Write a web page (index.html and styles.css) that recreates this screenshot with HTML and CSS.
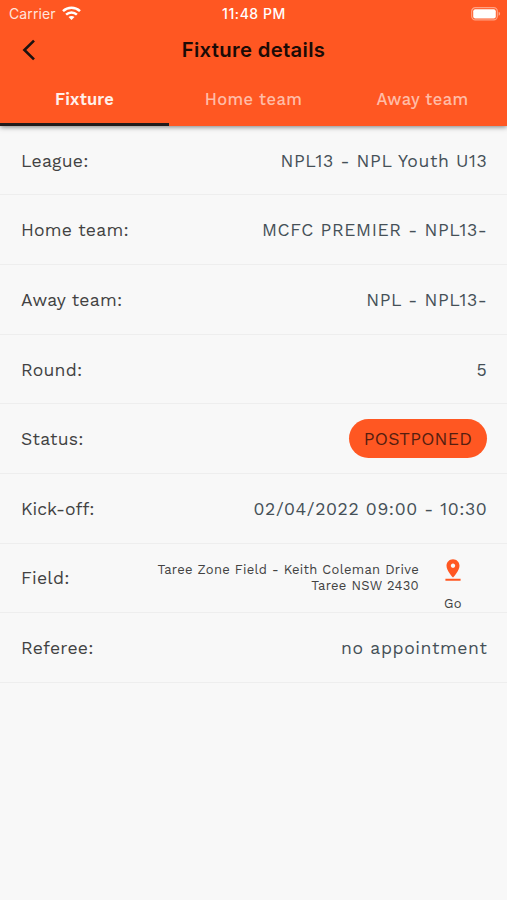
FILE: index.html
```html
<!DOCTYPE html>
<html lang="en">
<head>
<meta charset="utf-8">
<title>Fixture details</title>
<link rel="stylesheet" href="styles.css">
</head>
<body>
<header class="header">
  <div class="status-bar">
    <div class="carrier"><span>Carrier</span>
      <svg width="19" height="15" viewBox="0 0 19 15" fill="none" stroke="#fff" stroke-width="2.5"><path d="M1 5.2C5.8.7 13.2.7 18 5.2M4.1 8.7c3.1-2.9 7.7-2.9 10.8 0"/><path d="M9.5 14.1 6.5 11c1.7-1.5 4.3-1.5 6 0z" fill="#fff" stroke="none"/></svg>
    </div>
    <div class="clock">11:48 PM</div>
    <svg class="battery" width="30" height="14" viewBox="0 0 30 14"><rect x=".7" y=".7" width="25.6" height="12.2" rx="3.6" fill="none" stroke="#fff" stroke-opacity=".45" stroke-width="1.2"/><rect x="2.2" y="2.2" width="22.6" height="9.2" rx="2" fill="#fff"/><path d="M27.6 4.8c2 .7 2 3.3 0 4z" fill="#fff" fill-opacity=".5"/></svg>
  </div>
  <div class="title-bar">
    <svg class="back" width="14" height="22" viewBox="0 0 14 22" fill="none" stroke="#1b1210" stroke-width="2.6"><path d="M12 1.6 2.4 11l9.6 9.4"/></svg>
    <h1>Fixture details</h1>
  </div>
  <nav class="tabs">
    <a class="tab active">Fixture</a>
    <a class="tab">Home team</a>
    <a class="tab">Away team</a>
  </nav>
</header>
<main class="details">
  <div class="row"><span class="label">League:</span><span class="value">NPL13 - NPL Youth U13</span></div>
  <div class="row"><span class="label">Home team:</span><span class="value">MCFC PREMIER - NPL13-</span></div>
  <div class="row"><span class="label">Away team:</span><span class="value">NPL - NPL13-</span></div>
  <div class="row"><span class="label">Round:</span><span class="value">5</span></div>
  <div class="row"><span class="label">Status:</span><span class="badge">POSTPONED</span></div>
  <div class="row"><span class="label ligatures">Kick-off:</span><span class="value">02/04/2022 09:00 - 10:30</span></div>
  <div class="row"><span class="label">Field:</span>
    <div class="address"><span>Taree Zone Field - Keith Coleman Drive</span><span>Taree NSW 2430</span></div>
    <div class="go">
      <svg width="26" height="26" viewBox="0 0 24 24" fill="#ff5722"><path d="M18 8c0-3.31-2.69-6-6-6S6 4.69 6 8c0 4.5 6 11 6 11s6-6.5 6-11zm-8 0c0-1.1.9-2 2-2s2 .9 2 2-.89 2-2 2-2-.9-2-2zM5 20v2h14v-2H5z"/></svg>
      <span>Go</span>
    </div>
  </div>
  <div class="row"><span class="label">Referee:</span><span class="value">no appointment</span></div>
</main>
</body>
</html>
```
FILE: styles.css
```css
* { box-sizing: border-box; }
body { margin: 0; min-height: 900px; background: #f8f8f8; font-family: "Work Sans", Inter, sans-serif; color: #424242; }
svg { display: block; flex: none; }
.header { height: 125.8px; background: #ff5722; box-shadow: 0 1px 5px rgba(0,0,0,.5); }
.status-bar { display: grid; grid-template-columns: 1fr auto 1fr; align-items: center; height: 27px; padding: 0 6px 0 9px; color: #fff; font-family: Inter, sans-serif; }
.carrier { display: flex; align-items: center; gap: 6px; font-size: 14px; letter-spacing: .1px; color: #ffe4dc; }
.clock { margin-right: 2px; font-size: 14px; font-weight: 500; letter-spacing: .55px; }
.battery { justify-self: end; }
.title-bar { display: grid; grid-template-columns: 1fr auto 1fr; align-items: center; height: 46px; padding: 0 22px; }
h1 { margin: 0 0 2px; font-family: Inter, sans-serif; font-size: 20.3px; font-weight: 600; letter-spacing: .33px; color: #1b0b06; }
.tabs { display: grid; grid-template-columns: repeat(3, 1fr); height: 52.8px; }
.tab { display: flex; justify-content: center; align-items: center; border-bottom: 3.5px solid transparent; padding-top: 4px; font-size: 16.5px; font-weight: 500; letter-spacing: .42px; color: #ffbca7; }
.tab.active { color: #fff0eb; border-color: #211b1b; font-weight: 600; letter-spacing: .2px; }
.row { display: flex; justify-content: space-between; align-items: center; height: 69.65px; padding: 1px 19px 0 21px; border-bottom: 1px solid #eee; white-space: nowrap; }
.label { font-size: 17.6px; letter-spacing: .25px; }
.label.ligatures { letter-spacing: 0; }
.value { margin-right: .6px; font-size: 17.6px; letter-spacing: .6px; color: #455057; }
.badge { display: flex; align-items: center; justify-content: center; width: 138px; height: 39px; margin: 0 1px 2px 0; padding-top: 2px; border-radius: 20px; background: #ff5722; color: #551e10; font-size: 17.6px; letter-spacing: .3px; }
.address { display: flex; flex-direction: column; align-items: flex-end; margin-left: auto; font-size: 13px; line-height: 16px; letter-spacing: .3px; }
.go { display: flex; flex-direction: column; align-items: center; width: 68px; height: 100%; margin-right: 1px; padding-top: 12px; gap: 13px; font-size: 13px; line-height: 16px; letter-spacing: .3px; }
```
